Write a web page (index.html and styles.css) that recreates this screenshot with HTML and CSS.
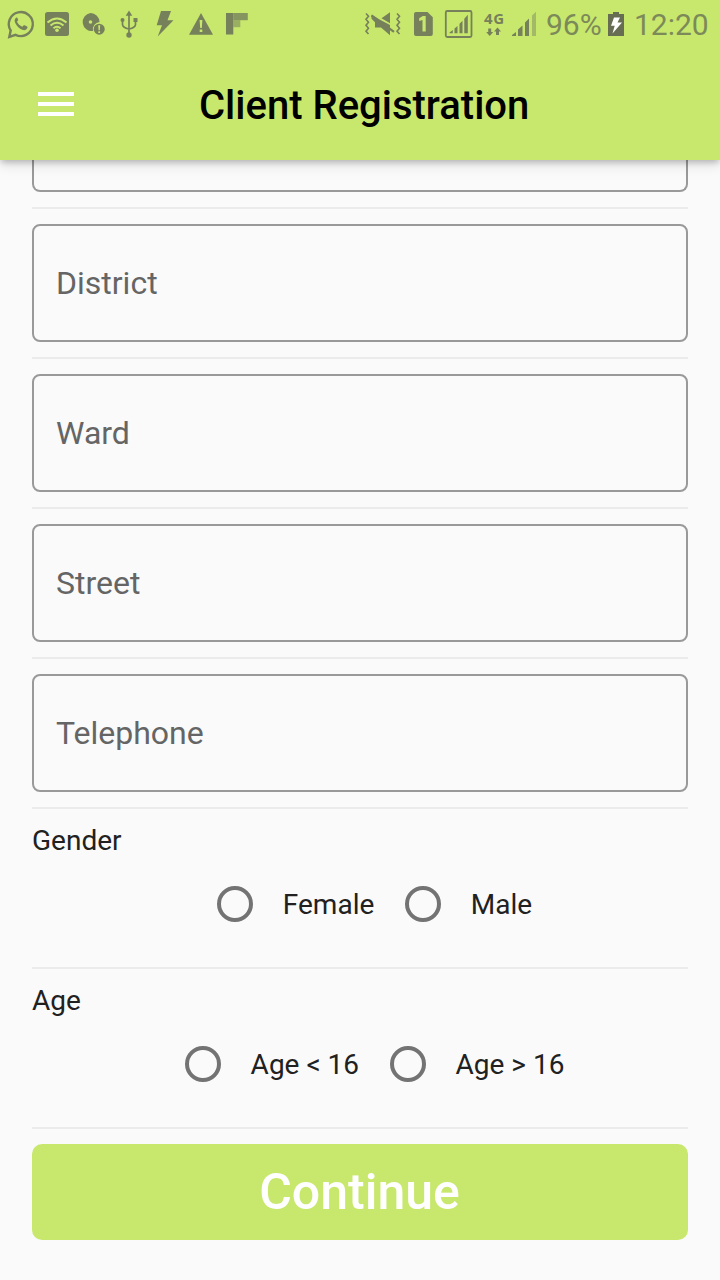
FILE: index.html
```html
<!DOCTYPE html>
<html lang="en">
<head>
<meta charset="utf-8">
<title>Client Registration</title>
<link rel="stylesheet" href="styles.css">
</head>
<body>
<header class="top">
  <div class="status">
    <div class="notices">
      <svg width="36" height="48" viewBox="3 0 36 48"><path d="M10.700 30.500 A12 12 0 1 1 15.500 34.800 L9.300 37 Z" fill="none" stroke="currentColor" stroke-width="2.400"/><path d="M17 17.300c-2 .5-3 3-2 5.200 1.500 3.500 4.500 6.500 8 7.500 2 .5 4-.5 4.500-2.500l-.3-1-3.200-1.600-1.700 1.800c-2.500-1-4.300-2.900-5.300-5l1.300-1.800-1.300-2.600z" fill="currentColor"/></svg>
      <svg width="36" height="48" viewBox="39 0 36 48"><rect x="45" y="12" width="24" height="24" rx="2.500" fill="currentColor"/><g class="knock"><path d="M47.500 22.500q9.500-8 19 0M50.500 25.500q6.500-5.500 13 0M53.500 28.200q3.500-3 7 0"/></g><circle class="knock-fill" cx="57" cy="30.300" r="1.800"/></svg>
      <svg width="36" height="48" viewBox="75 0 36 48"><path fill="currentColor" fill-rule="evenodd" d="M90.500 13a9 9 0 0 1 9 9 7.500 7.500 0 0 0-6.500 9A9 9 0 1 1 90.500 13zm0 7.200a1.800 1.800 0 1 0 0 3.600 1.800 1.800 0 0 0 0-3.600z"/><circle cx="99.200" cy="29.200" r="5.500" fill="currentColor"/><path class="knock-fill" d="M98.200 25.200h2l-.4 5h-1.200zM98.300 31.300h1.800v1.800h-1.800z"/></svg>
      <svg width="36" height="48" viewBox="111 0 36 48"><path d="M129 14v20M122.500 21v3.500q0 3 6.500 4.500M135.500 21v3.500q0 3-6.500 4.500" fill="none" stroke="currentColor" stroke-width="1.700"/><path d="M129 10.500l3.300 5.300h-6.600zM133.500 18h4v4h-4z" fill="currentColor"/><circle cx="122.500" cy="20" r="2" fill="currentColor"/><circle cx="129" cy="35" r="2.700" fill="currentColor"/></svg>
      <svg width="36" height="48" viewBox="147 0 36 48"><path d="M161 11h10l-3.500 9.300h6L157.700 36.500l4.300-11.200h-5.300z" fill="currentColor"/></svg>
      <svg width="36" height="48" viewBox="183 0 36 48"><path d="M201 13l12 21.700h-24z" fill="currentColor"/><path class="knock-fill" d="M199.600 20h2.800l-.6 8h-1.600zM199.700 29.500h2.600v2.500h-2.600z"/></svg>
      <svg width="36" height="48" viewBox="219 0 36 48"><path d="M226 13h7.300v21.500H226z" fill="currentColor"/><path d="M233.300 13h14.500v7.200h-14.500z" fill="currentColor" opacity=".8"/><path d="M233.300 20.200h7v7h-7z" fill="currentColor" opacity=".55"/></svg>
    </div>
    <div class="signals">
      <svg width="40" height="48" viewBox="363 0 40 48"><path d="M371.500 14.800l8 4.600 10.500 5.500v10.300l-9-7.700h-6v-5.300l-3.500-3.500zM381.500 18.200l8.500-6v11z" fill="currentColor"/><path d="M371.500 15.500L394 31.800" stroke="currentColor" stroke-width="2.200"/><path d="M366 13.500l2.500 2.700-2.500 3 2.500 3-2.500 3 2.500 3-2.500 3 2.500 2.800M397 13.500l2.500 2.700-2.500 3 2.500 3-2.500 3 2.500 3-2.500 3 2.500 2.800" fill="none" stroke="currentColor" stroke-width="1.600"/></svg>
      <svg width="40" height="48" viewBox="403 0 40 48"><path d="M416 12h11.500l5.300 5.300V34a2 2 0 0 1-2 2H416a2 2 0 0 1-2-2V14a2 2 0 0 1 2-2z" fill="currentColor"/><path class="knock-fill" d="M422.800 16h2.900v15.500h-3.200V20l-3.300 1v-2.700z"/></svg>
      <svg width="32" height="48" viewBox="443 0 32 48"><rect x="445.800" y="11" width="25.700" height="26" rx="1.500" fill="none" stroke="currentColor" stroke-width="1.800"/><path d="M449.500 33.200v-.8l3.300-2.500v3.300zM454.500 33.200v-4.600l3-2.700v7.300zM459.500 33.200v-9.500l3-3v12.500zM464.300 33.200V18.800l3.500-4v18.400z" fill="currentColor"/></svg>
      <svg width="32" height="48" viewBox="475 0 32 48"><text class="network" x="484" y="24" textLength="20">4G</text><path d="M488.200 28.500h3v3.500h2l-3.500 4-3.500-4h2zM496 35v-3.500h-2l3.500-4 3.500 4h-2V35z" fill="currentColor"/></svg>
      <svg width="36" height="48" viewBox="507 0 36 48"><path d="M512 36v-1l4-3v4zM518 36v-6.500l4.500-4V36zM525 36V22.500l4-4V36z" fill="currentColor"/><path d="M532 36V15.500l4-3.700V36z" fill="currentColor" opacity=".45"/></svg>
      <span class="percent">96%</span>
      <svg width="20" height="48" viewBox="606 0 20 48"><path class="battery" d="M608 14h5v-2h6v2h5v22h-16z"/><path d="M614 17.500h6l-2.500 5h4.500l-9.500 11 2.200-7.800H611z" fill="#fff"/></svg>
      <span class="clock">12:20</span>
    </div>
  </div>
  <div class="appbar">
    <button class="menu" aria-label="Menu"><span></span><span></span><span></span></button>
    <h1 class="title">Client Registration</h1>
  </div>
</header>
<main class="form">
  <div class="field field-cut"></div>
  <hr class="rule">
  <div class="field">District</div>
  <hr class="rule">
  <div class="field">Ward</div>
  <hr class="rule">
  <div class="field">Street</div>
  <hr class="rule">
  <div class="field">Telephone</div>
  <hr class="rule">
  <section class="choice">
    <h2 class="legend">Gender</h2>
    <div class="options">
      <div class="option"><span class="radio"></span><span>Female</span></div>
      <div class="option"><span class="radio"></span><span>Male</span></div>
    </div>
  </section>
  <hr class="rule">
  <section class="choice">
    <h2 class="legend">Age</h2>
    <div class="options">
      <div class="option"><span class="radio"></span><span>Age &lt; 16</span></div>
      <div class="option"><span class="radio"></span><span>Age &gt; 16</span></div>
    </div>
  </section>
  <hr class="rule">
  <button class="continue">Continue</button>
</main>
</body>
</html>
```
FILE: styles.css
```css
* { box-sizing: border-box; }
body {
  margin: 0;
  height: 1280px;
  overflow: hidden;
  background: #fafafa;
  color: #212121;
  font-family: Roboto, sans-serif;
  display: flex;
  flex-direction: column;
}
.top {
  position: relative;
  z-index: 1;
  flex: none;
  height: 160px;
  background: #c8e86d;
  box-shadow: 0 3px 6px -1px rgba(0,0,0,.2), 0 4px 12px rgba(0,0,0,.14);
}
.status {
  display: flex;
  height: 48px;
  padding-left: 3px;
  color: #76805b;
}
.status svg { display: block; flex: none; }
.notices, .signals { display: flex; }
.signals { margin-left: 108px; }
.knock { fill: none; stroke: #c8e86d; stroke-width: 2; }
.knock-fill { fill: #c8e86d; }
.network { font: 700 15px "Open Sans", sans-serif; fill: currentColor; }
.battery { fill: #666d52; }
.percent, .clock {
  font-size: 30px;
  line-height: 50px;
  color: #7c8a59;
  white-space: nowrap;
}
.percent { width: 63px; padding-left: 3px; }
.clock { padding-left: 8px; }
.appbar {
  display: flex;
  align-items: center;
  height: 112px;
  padding-left: 38px;
}
.menu {
  display: flex;
  flex-direction: column;
  gap: 6px;
  width: 36px;
  padding: 0;
  border: 0;
  background: none;
}
.menu span { height: 4px; background: #fff; }
.title {
  margin: 0 0 0 125px;
  padding-top: 4px;
  font-size: 40px;
  font-weight: 500;
  line-height: 48px;
  color: #000;
  white-space: nowrap;
}
.form {
  display: flex;
  flex-direction: column;
  padding: 0 32px;
}
.field {
  display: flex;
  align-items: center;
  flex: none;
  height: 118px;
  padding-left: 22px;
  border: 2px solid #999;
  border-radius: 8px;
  font-size: 32px;
  color: #656565;
}
.field-cut {
  height: 32px;
  border-top: 0;
  border-radius: 0 0 8px 8px;
}
.rule {
  width: 100%;
  height: 2px;
  margin: 15px 0;
  border: 0;
  background: #ebebeb;
}
.choice { height: 128px; font-size: 28px; }
.legend {
  height: 32px;
  margin: 0;
  font-size: 28px;
  font-weight: 400;
  line-height: 34px;
}
.options {
  display: flex;
  justify-content: center;
  gap: .5px;
  height: 96px;
  padding-right: 1px;
}
.option { display: flex; align-items: center; white-space: nowrap; }
.radio {
  width: 36px;
  height: 36px;
  margin: 0 30px;
  border: 4px solid #737373;
  border-radius: 50%;
}
.continue {
  height: 96px;
  padding: 0 1px 0 0;
  border: 0;
  border-radius: 10px;
  background: #c8e86d;
  color: #fff;
  font: 500 50px Roboto, sans-serif;
}
```
